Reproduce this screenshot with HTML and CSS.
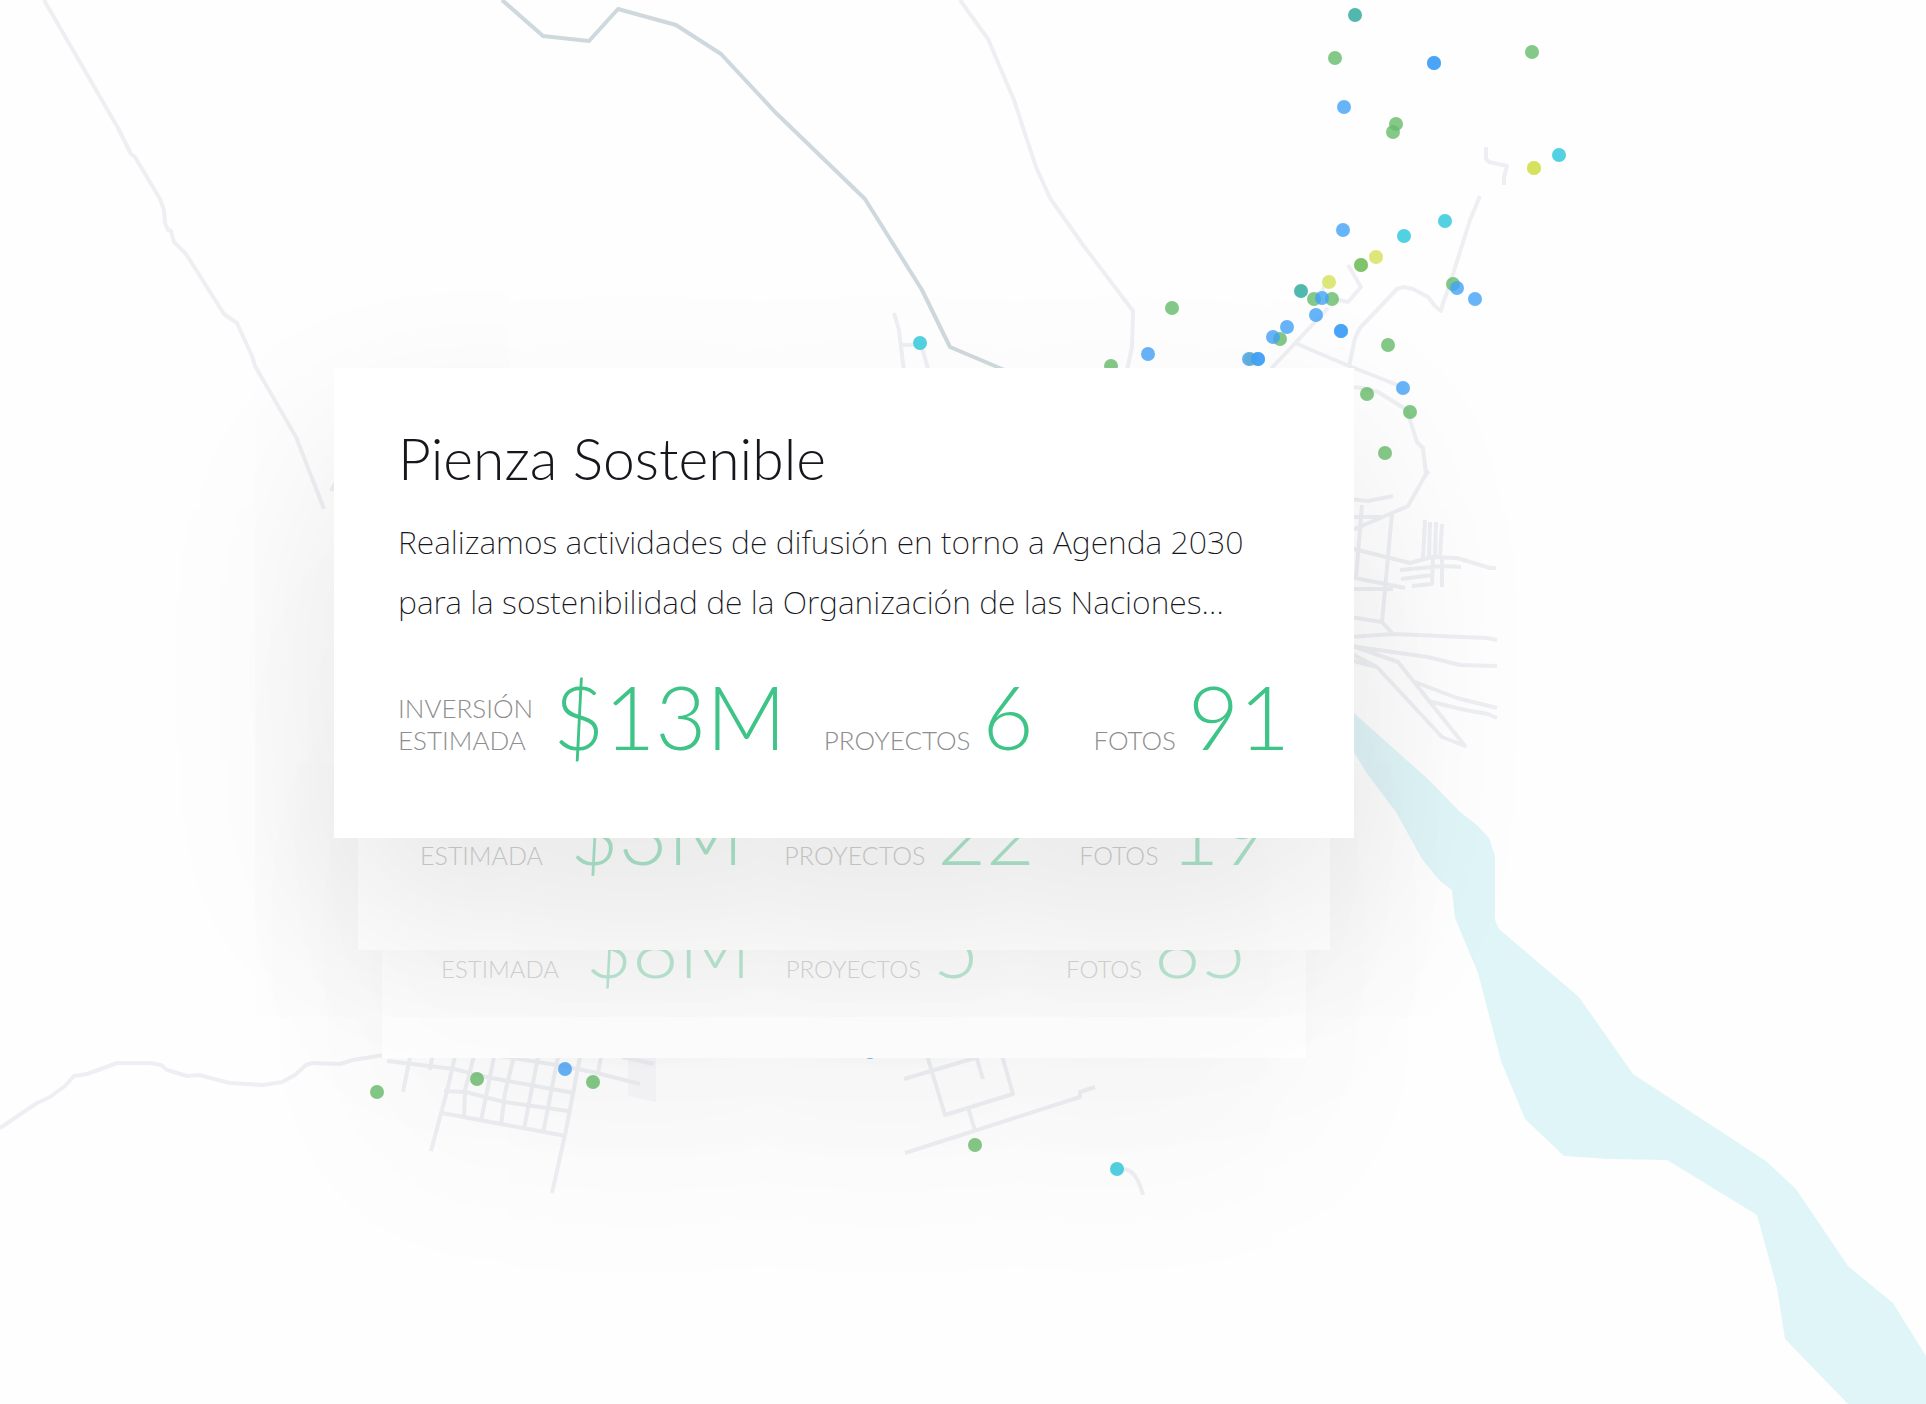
FILE: index.html
```html
<!DOCTYPE html>
<html lang="es">
<head>
<meta charset="utf-8">
<meta name="viewport" content="width=device-width, initial-scale=1">
<title>Pienza Sostenible</title>
<link rel="stylesheet" href="styles.css">
</head>
<body>
<main class="scene">
  <svg class="map" viewBox="0 0 1926 1404" preserveAspectRatio="xMidYMid slice" aria-hidden="true">
    <path class="river" d="M1340 701 1354 713 1392 747 1430 781 1459 811 1478 826 1489 838 1495 856V920L1499 929 1579 997 1633 1074 1766 1161 1796 1189 1848 1266 1893 1303 1926 1356V1404H1848L1785 1339 1777 1288 1757 1215 1667 1160 1609 1159 1564 1156 1525 1119 1501 1061 1478 973 1455 918 1452 890 1439 880 1422 859 1396 812 1368 775 1340 730Z"/>
    <path class="block" d="M628 1040H656V1102L628 1096Z"/>
    <g class="roads">
      <path d="M44 0 118 128 131 154 135 157 160 199 164 210 165 223 168 230 171 231 174 242 186 254 224 314 237 323 252 356 255 366 296 437 324 509"/>
      <path d="M960 0 988 39 1014 100 1036 167 1050 198 1083 245 1133 311 1132 347 1127 370"/>
      <path d="M894 313 899 330 904 372M901 345H913M922 348 929 372"/>
      <path d="M1486 147V159L1489 162 1507 166 1504 177V185"/>
      <path d="M1480 196 1470 220 1448 290 1443 303 1441 311 1435 306 1428 297 1413 289 1404 287 1397 289 1360 328 1355 338 1349 367"/>
      <path d="M1270 370 1328 308M1322 292 1324 286M1348 265 1361 287 1348 302 1335 299M1295 343 1349 366 1400 386"/>
      <path d="M1350 387 1362 388 1378 392 1407 410 1410 420 1417 442 1423 448 1426 474 1408 506 1392 513 1350 531M1426 474 1429 471"/>
      <path d="M1350 499 1368 501 1393 496M1350 517H1383M1362 505 1356 578M1392 513 1382 622 1393 634"/>
      <path d="M1350 548 1410 563 1432 557 1457 558 1490 568H1496"/>
      <path d="M1425 520 1423 558M1430 522 1429 558M1436 522 1435 558M1442 524 1440 557M1442 557V587M1400 570 1443 566 1461 567M1401 579 1433 575M1433 557 1432 584 1412 586"/>
      <path d="M1350 577 1405 588M1350 589H1393M1350 617 1382 622M1350 637 1393 634 1487 638 1497 640M1350 646 1428 657 1460 665 1497 666"/>
      <path d="M1350 645 1398 662 1465 746 1442 737 1377 667 1350 653M1350 660 1377 667M1415 682 1457 698 1497 708M1428 701 1465 710 1488 714 1497 718"/>
      <path d="M0 1128 37 1103 50 1097 65 1086 74 1076 87 1074 117 1063H150L161 1065 167 1070 187 1076 199 1075 230 1083 263 1085 282 1082 295 1075 306 1065 312 1063 340 1064 353 1060 390 1054"/>
      <path d="M387 1061 454 1069 486 1077 574 1093M500 1056 557 1065 593 1072 640 1084M622 1057 654 1064M444 1091 466 1092 504 1102 568 1111M442 1113 566 1136"/>
      <path d="M411 1052 403 1092M433 1052 430 1070M456 1052 447 1091 431 1151M475 1052 465 1090 464 1117M495 1052 481 1121M515 1052 505 1093 501 1125M539 1052 524 1129M559 1052 543 1133M581 1052 565 1135 552 1193M602 1052 598 1073"/>
      <path d="M904 1079 975 1058M976 1056 983 1079M926 1052 945 1115 1013 1094 1001 1052M968 1107 975 1131M905 1153 1080 1097V1092L1095 1087M1122 1169Q1136 1168 1143 1195"/>
      <path d="M331 491 337 480"/>
    </g>
    <path class="highway" d="M502 0 543 36 589 41 618 9 676 25 721 54 775 112 865 199 922 290 950 347 1002 369 1030 382"/>
    <g class="teal"><circle cx="1355" cy="15" r="7"/><circle cx="1301" cy="291" r="7"/></g>
    <g class="yellow"><circle cx="1534" cy="168" r="7"/><circle cx="1534" cy="168" r="7"/><circle cx="1376" cy="257" r="7"/><circle cx="1329" cy="282" r="7"/><circle cx="1361" cy="265" r="7"/><circle cx="1251" cy="359" r="7"/></g>
    <g class="green"><circle cx="1335" cy="58" r="7"/><circle cx="1532" cy="52" r="7"/><circle cx="1396" cy="124" r="7"/><circle cx="1393" cy="132" r="7"/><circle cx="1361" cy="265" r="7"/><circle cx="1314" cy="299" r="7"/><circle cx="1332" cy="299" r="7"/><circle cx="1280" cy="339" r="7"/><circle cx="1388" cy="345" r="7"/><circle cx="1453" cy="284" r="7"/><circle cx="1367" cy="394" r="7"/><circle cx="1410" cy="412" r="7"/><circle cx="1385" cy="453" r="7"/><circle cx="1172" cy="308" r="7"/><circle cx="1111" cy="366" r="7"/><circle cx="377" cy="1092" r="7"/><circle cx="477" cy="1079" r="7"/><circle cx="593" cy="1082" r="7"/><circle cx="975" cy="1145" r="7"/></g>
    <g class="blue"><circle cx="1434" cy="63" r="7"/><circle cx="1434" cy="63" r="7"/><circle cx="1344" cy="107" r="7"/><circle cx="1343" cy="230" r="7"/><circle cx="1322" cy="298" r="7"/><circle cx="1316" cy="315" r="7"/><circle cx="1287" cy="327" r="7"/><circle cx="1273" cy="337" r="7"/><circle cx="1341" cy="331" r="7"/><circle cx="1341" cy="331" r="7"/><circle cx="1249" cy="359" r="7"/><circle cx="1258" cy="359" r="7"/><circle cx="1258" cy="359" r="7"/><circle cx="1457" cy="288" r="7"/><circle cx="1475" cy="299" r="7"/><circle cx="1403" cy="388" r="7"/><circle cx="1148" cy="354" r="7"/><circle cx="565" cy="1069" r="7"/><circle cx="870" cy="1052" r="7"/></g>
    <g class="cyan"><circle cx="1559" cy="155" r="7"/><circle cx="1445" cy="221" r="7"/><circle cx="1404" cy="236" r="7"/><circle cx="920" cy="343" r="7"/><circle cx="1117" cy="1169" r="7"/></g>
  </svg>

  <section class="stack">
    <article class="card card-front">
      <h1 class="title">Pienza Sostenible</h1>
      <p class="summary">Realizamos actividades de difusión en torno a Agenda 2030 para la sostenibilidad de la Organización de las Naciones…</p>
      <dl class="stats">
        <div class="stat"><dt>INVERSIÓN<br>ESTIMADA</dt><dd>$13M</dd></div>
        <div class="stat"><dt>PROYECTOS</dt><dd>6</dd></div>
        <div class="stat"><dt>FOTOS</dt><dd>91</dd></div>
      </dl>
    </article>
    <article class="card card-middle">
      <dl class="stats">
        <div class="stat"><dt>INVERSIÓN<br>ESTIMADA</dt><dd>$3M</dd></div>
        <div class="stat"><dt>PROYECTOS</dt><dd>22</dd></div>
        <div class="stat"><dt>FOTOS</dt><dd>19</dd></div>
      </dl>
    </article>
    <article class="card card-back">
      <dl class="stats">
        <div class="stat"><dt>INVERSIÓN<br>ESTIMADA</dt><dd>$8M</dd></div>
        <div class="stat"><dt>PROYECTOS</dt><dd>5</dd></div>
        <div class="stat"><dt>FOTOS</dt><dd>85</dd></div>
      </dl>
    </article>
  </section>
</main>
</body>
</html>
```
FILE: styles.css
```css
* {
  box-sizing: border-box;
}

body {
  margin: 0;
  background: #fefefe;
  color: #16161d;
  font-family: Lato, "Open Sans", sans-serif;
  font-weight: 300;
}

.scene {
  position: relative;
  display: grid;
  grid-template-columns: 334fr 1020fr 572fr;
  align-items: start;
  min-height: 100vh;
  padding: 368px 0 200px;
  overflow: hidden;
}

/* Map backdrop */
.map {
  position: absolute;
  inset: 0;
  width: 100%;
  height: 100%;
}

.river { fill: #e0f5f8; }
.block { fill: #f8f8fb; }

.roads,
.highway {
  fill: none;
  stroke: #eeeff3;
  stroke-width: 4;
  stroke-linejoin: round;
}

.highway { stroke: #cfd8dd; }

.teal { fill: #26a69a; fill-opacity: 0.8; }
.green { fill: #66bb6a; fill-opacity: 0.8; }
.blue { fill: #42a1f7; fill-opacity: 0.8; }
.cyan { fill: #26c6da; fill-opacity: 0.8; }
.yellow { fill: #d4e157; fill-opacity: 0.8; }

/* Stacked cards */
.stack {
  grid-column: 2;
  position: relative;
  display: flex;
  flex-direction: column;
  isolation: isolate;
}

.card {
  position: relative;
  display: flex;
  flex-direction: column;
  justify-content: flex-end;
  background: #fff;
}

.card-front {
  z-index: 3;
  min-height: 470px;
  padding: 32px 64px 78px;
  box-shadow: 0 84px 190px rgba(0, 0, 0, 0.1);
}

.card-middle {
  z-index: 2;
  min-height: 448px;
  margin: -336px 24px 0;
  padding: 0 62px 73px;
  box-shadow: 0 88px 190px rgba(0, 0, 0, 0.03);
}

.card-back {
  z-index: 1;
  min-height: 426px;
  margin: -318px 48px 0;
  padding: 0 59px 67px;
  box-shadow: 0 100px 200px rgba(0, 0, 0, 0.03);
}

.title {
  margin: 0;
  font-size: 57px;
  font-weight: 300;
  line-height: 76px;
}

.summary {
  margin: 16px 0 0;
  font-family: "Noto Sans", Lato, sans-serif;
  font-size: 32px;
  font-weight: 200;
  line-height: 60px;
}

/* Figures */
.stats {
  display: grid;
  grid-template-columns: 428fr 271fr 193fr;
  margin: 40px 0 0;
}

.stat {
  display: flex;
  align-items: last baseline;
  gap: 12px;
}

.stat:first-child {
  gap: 20px;
}

.stat dt {
  color: #8e8e8e;
  font-size: 26px;
  font-weight: 300;
  line-height: 32px;
}

.stat dd {
  margin: 0;
  color: #3ec487;
  font-size: 88px;
  font-weight: 300;
  line-height: 88px;
}

.card-middle .stats {
  grid-template-columns: 367fr 297fr 184fr;
  opacity: 0.42;
}

.card-middle dt { font-size: 25px; }
.card-middle dd { font-size: 84px; }

.card-back .stats {
  grid-template-columns: 348fr 283fr 177fr;
  opacity: 0.34;
}

.card-back dt { font-size: 24px; }
.card-back dd { font-size: 80px; }
```
